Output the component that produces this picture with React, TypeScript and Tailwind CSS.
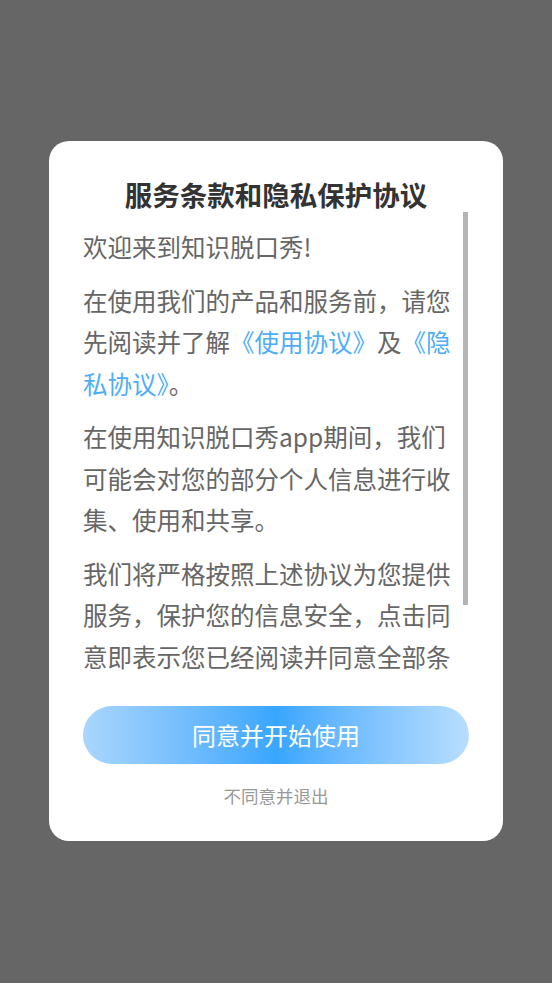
import React from 'react';

const font = { fontFamily: '"Noto Sans CJK SC", "Noto Sans", sans-serif' };

const Link: React.FC<{ children: React.ReactNode }> = ({ children }) => (
  <span className="text-[#4daef6]">{children}</span>
);

export default function App() {
  return (
    <div className="min-h-screen w-full bg-[#666666] flex justify-center items-start pt-[141px]" style={font}>
      <div className="w-[454px] h-[700px] bg-white rounded-[20px] flex flex-col items-center pt-[34px]">
        <h1 className="text-[27.5px] leading-[38px] font-bold text-[#333333] text-center">服务条款和隐私保护协议</h1>

        {/* scroll area with thin gray thumb */}
        <div className="relative mt-[-1px] w-[386px] h-[473px] overflow-hidden">
          <div className="pr-[10px] pt-[14px] text-[24.5px] leading-[41.5px] text-[#666666]">
            <p>欢迎来到知识脱口秀!</p>
            <p className="mt-[12px]">
              在使用我们的产品和服务前，请您先阅读并了解<Link>《使用协议》</Link>及<Link>《隐私协议》</Link>。
            </p>
            <p className="mt-[12px]">在使用知识脱口秀app期间，我们可能会对您的部分个人信息进行收集、使用和共享。</p>
            <p className="mt-[12px]">
              我们将严格按照上述协议为您提供服务，保护您的信息安全，点击同意即表示您已经阅读并同意全部条款。
            </p>
          </div>
          <div className="absolute top-0 right-[1px] w-[5px] h-[393px] bg-[#b4b4b4]" />
        </div>

        <button className="mt-[21px] w-[386px] h-[58px] rounded-full bg-gradient-to-r from-[#a9d6fc] via-[#37a6fd] to-[#b8defe] text-white text-[24px] leading-none">
          同意并开始使用
        </button>
        <button className="mt-[20px] text-[17.5px] leading-[24px] text-[#999999]">不同意并退出</button>
      </div>
    </div>
  );
}
